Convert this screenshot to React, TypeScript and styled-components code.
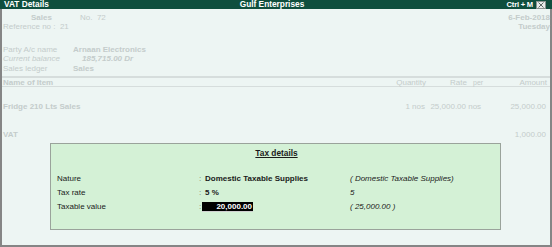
import React from "react";
import styled, { createGlobalStyle } from "styled-components";

const Global = createGlobalStyle`
  html, body { margin: 0; padding: 0; background: #edf5f3; }
  * { box-sizing: border-box; }
`;

const Window = styled.div`
  position: relative;
  width: 552px;
  height: 247px;
  font-family: "Liberation Sans", Arial, sans-serif;
  background: #edf5f3;
  overflow: hidden;
`;

const TitleBar = styled.div`
  height: 9px;
  background: #0f4f3e;
  color: #ffffff;
  font-weight: bold;
  font-size: 8.3px;
  line-height: 9px;
  display: grid;
  grid-template-columns: 1fr auto 1fr;
  align-items: center;
`;

const TitleLeft = styled.span`
  padding-left: 4px;
`;

const TitleCenter = styled.span`
  margin-left: -8px;
`;

const TitleRight = styled.div`
  display: flex;
  justify-content: flex-end;
  align-items: center;
  gap: 3px;
  padding-right: 6px;
`;

const Shortcut = styled.span`
  font-size: 7.6px;
  letter-spacing: -0.2px;
`;

const CloseBox = styled.span`
  display: inline-flex;
  width: 10px;
  height: 8px;
  background: #e8ecea;
  border: 1px solid #8a9490;
  align-items: center;
  justify-content: center;
`;

const Body = styled.div`
  height: 238px;
  border: 2px solid #858585;
  border-top: none;
  display: flex;
  flex-direction: column;
  color: #c4cccb;
  font-size: 8px;
`;

const Header = styled.div`
  display: flex;
  justify-content: space-between;
  padding: 4px 0 0 1px;
`;

const HeaderLeft = styled.div`
  display: flex;
  flex-direction: column;
`;

const HeaderRight = styled.div`
  display: flex;
  flex-direction: column;
  align-items: flex-end;
  font-weight: bold;
`;

const Line = styled.div<{ $gap?: number }>`
  height: 9.4px;
  line-height: 9.4px;
  white-space: nowrap;
  margin-top: ${(p) => p.$gap ?? 0}px;
`;

const VoucherType = styled.span`
  display: inline-block;
  width: 77px;
  padding-left: 28px;
  font-weight: bold;
`;

const LedgerGrid = styled.div`
  display: grid;
  grid-template-columns: 70px auto;
  margin-top: 13px;
  grid-auto-rows: 9.5px;
  line-height: 9.5px;
  white-space: nowrap;
`;

const LedgerLabel = styled.span<{ $italic?: boolean }>`
  font-style: ${(p) => (p.$italic ? "italic" : "normal")};
`;

const LedgerValue = styled.span<{ $italic?: boolean; $indent?: number }>`
  font-weight: bold;
  font-style: ${(p) => (p.$italic ? "italic" : "normal")};
  padding-left: ${(p) => p.$indent ?? 0}px;
`;

const Separator = styled.div`
  margin-top: 3px;
  height: 2px;
  background: #d6dddc;
`;

const ColumnHeader = styled.div`
  display: grid;
  grid-template-columns: 1fr 60px 41px 20px 60px;
  height: 9px;
  line-height: 9px;
  padding: 0 3px 0 1px;
  border-bottom: 1px solid #d6dddc;
  white-space: nowrap;
`;

const Cell = styled.span<{ $align?: string; $bold?: boolean; $small?: boolean }>`
  text-align: ${(p) => p.$align ?? "left"};
  font-weight: ${(p) => (p.$bold ? "bold" : "normal")};
  font-size: ${(p) => (p.$small ? "7px" : "8px")};
  padding-left: ${(p) => (p.$small ? "6px" : "0")};
`;

const ItemRow = styled.div<{ $top: number }>`
  display: grid;
  grid-template-columns: 1fr 60px 41px 20px 60px;
  height: 10px;
  line-height: 10px;
  margin-top: ${(p) => p.$top}px;
  padding: 0 4px 0 1px;
  white-space: nowrap;
`;

const Dialog = styled.div`
  position: absolute;
  left: 50px;
  top: 143px;
  width: 451px;
  height: 87px;
  background: #d4f1d6;
  border: 1px solid #9aa39b;
  color: #1a1a1a;
  font-size: 8px;
  padding: 4px 0 0 6px;
`;

const DialogTitle = styled.div`
  text-align: center;
  font-weight: bold;
  font-size: 8.3px;
  text-decoration: underline;
  line-height: 10px;
  height: 10px;
  margin-left: -4px;
`;

const FieldGrid = styled.div`
  display: grid;
  grid-template-columns: 142px 3px 148px 1fr;
  grid-auto-rows: 14px;
  align-items: center;
  margin-top: 14px;
  line-height: 14px;
  white-space: nowrap;
`;

const Label = styled.span``;

const Colon = styled.span`
  color: #6f7a6f;
`;

const Value = styled.span`
  font-weight: bold;
  padding-left: 3px;
`;

const Previous = styled.span`
  font-style: italic;
`;

const InputBox = styled.span`
  display: inline-block;
  width: 51px;
  height: 10px;
  line-height: 10px;
  background: #000000;
  color: #ffffff;
  font-weight: bold;
  text-align: right;
  padding-right: 1px;
  vertical-align: middle;
  border-bottom: 1px solid #d0d0d0;
`;

const InputCell = styled.span`
  display: flex;
  align-items: center;
`;

export default function App() {
  return (
    <>
      <Global />
      <Window>
        <TitleBar>
          <TitleLeft>VAT Details</TitleLeft>
          <TitleCenter>Gulf Enterprises</TitleCenter>
          <TitleRight>
            <Shortcut>Ctrl + M</Shortcut>
            <CloseBox>
              <svg width="8" height="6" viewBox="0 0 8 6">
                <path d="M1.5 0.5 L6.5 5.5 M6.5 0.5 L1.5 5.5" stroke="#5d6a66" strokeWidth="1" />
              </svg>
            </CloseBox>
          </TitleRight>
        </TitleBar>
        <Body>
          <Header>
            <HeaderLeft>
              <Line>
                <VoucherType>Sales</VoucherType>
                <span>No.&nbsp; 72</span>
              </Line>
              <Line>Reference no :&nbsp; 21</Line>
              <LedgerGrid>
                <LedgerLabel>Party A/c name</LedgerLabel>
                <LedgerValue>Arnaan Electronics</LedgerValue>
                <LedgerLabel $italic>Current balance&nbsp;&nbsp;&nbsp;&nbsp;&nbsp;&nbsp;&nbsp;&nbsp;&nbsp;&nbsp;&nbsp;:</LedgerLabel>
                <LedgerValue $italic $indent={9}>185,715.00 Dr</LedgerValue>
                <LedgerLabel>Sales ledger</LedgerLabel>
                <LedgerValue>Sales</LedgerValue>
              </LedgerGrid>
            </HeaderLeft>
            <HeaderRight>
              <Line>6-Feb-2018</Line>
              <Line>Tuesday</Line>
            </HeaderRight>
          </Header>
          <Separator />
          <ColumnHeader>
            <Cell $bold>Name of Item</Cell>
            <Cell $align="right">Quantity</Cell>
            <Cell $align="right">Rate</Cell>
            <Cell $small>per</Cell>
            <Cell $align="right">Amount</Cell>
          </ColumnHeader>
          <ItemRow $top={15}>
            <Cell $bold>Fridge 210 Lts Sales</Cell>
            <Cell $align="right">1 nos</Cell>
            <Cell $align="right">25,000.00</Cell>
            <Cell>&nbsp;nos</Cell>
            <Cell $align="right">25,000.00</Cell>
          </ItemRow>
          <ItemRow $top={18}>
            <Cell $bold>VAT</Cell>
            <Cell />
            <Cell />
            <Cell />
            <Cell $align="right">1,000.00</Cell>
          </ItemRow>
        </Body>
        <Dialog>
          <DialogTitle>Tax details</DialogTitle>
          <FieldGrid>
            <Label>Nature</Label>
            <Colon>:</Colon>
            <Value>Domestic Taxable Supplies</Value>
            <Previous>( Domestic Taxable Supplies)</Previous>
            <Label>Tax rate</Label>
            <Colon>:</Colon>
            <Value>5 %</Value>
            <Previous>5</Previous>
            <Label>Taxable value</Label>
            <Colon>:</Colon>
            <InputCell>
              <InputBox>20,000.00</InputBox>
            </InputCell>
            <Previous>( 25,000.00 )</Previous>
          </FieldGrid>
        </Dialog>
      </Window>
    </>
  );
}
